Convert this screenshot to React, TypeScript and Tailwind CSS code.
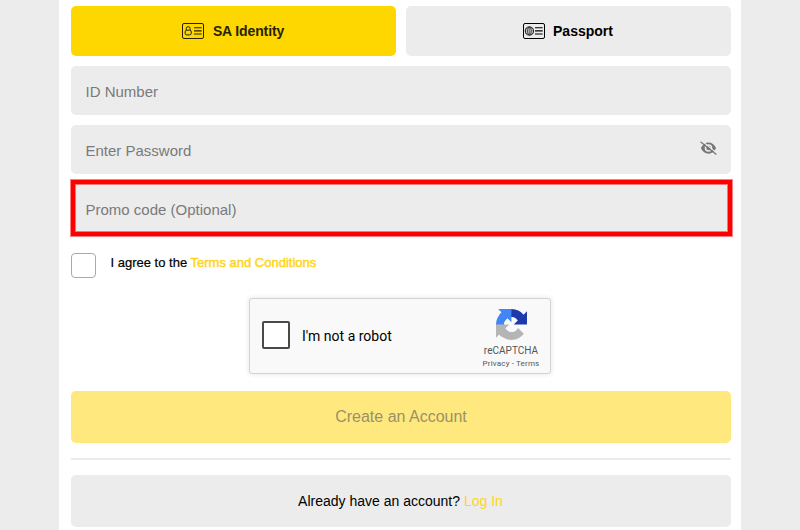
import { useState } from "react";
import type { ReactNode } from "react";

type Tab = "identity" | "passport";

function CardIcon({ children }: { children: ReactNode }) {
  return (
    <svg viewBox="0 0 22 16" className="h-4 w-[22px] shrink-0" fill="none" stroke="currentColor">
      <rect x="0.5" y="0.5" width="21" height="15" rx="1.5" strokeWidth="1" />
      {children}
      <path d="M12 4.8h7.7M12 7.9h7.7M12 11h7.7" strokeWidth="1.1" />
    </svg>
  );
}

function IdentityIcon() {
  return (
    <CardIcon>
      <path d="M4.300 7V5.500a1.900 1.900 0 0 1 3.800 0v1.500" strokeWidth="1" />
      <rect x="3.100" y="7.200" width="6.200" height="4.700" rx="1.800" strokeWidth="1" />
    </CardIcon>
  );
}

function PassportIcon() {
  return (
    <CardIcon>
      <circle cx="6.4" cy="8" r="4.100" strokeWidth="0.9" />
      <ellipse cx="6.4" cy="8" rx="1.9" ry="4.100" strokeWidth="0.6" />
      <path d="M2.300 8h8.200M3 5.900h6.800M3 10.100h6.800M6.400 3.900v8.200" strokeWidth="0.4" />
    </CardIcon>
  );
}

function EyeOffIcon() {
  return (
    <svg viewBox="0 0 17 14" className="h-3.5 w-[17px]" fill="none">
      <path d="M0.9 7C4 -0.5 13 -0.5 16.1 7C13 14.5 4 14.5 0.9 7Z" fill="currentColor" />
      <circle cx="8.5" cy="7" r="3" stroke="#ececec" strokeWidth="1.6" />
      <path d="M1.7 -0.1L17.3 12.4" stroke="#ececec" strokeWidth="1.2" />
      <path d="M0.5 0.7L16.4 13.4" stroke="currentColor" strokeWidth="1.3" />
    </svg>
  );
}

function RecaptchaLogo() {
  return (
    <svg viewBox="0 0 64 64" className="size-[31px]">
      <path
        fill="#1c3aa9"
        d="M64 31.955l-.033-1.37V4.687l-7.16 7.16C50.948 4.674 42.033.093 32.05.093c-10.4 0-19.622 4.96-25.458 12.64l11.736 11.86a15.55 15.55 0 0 1 4.754-5.334c2.05-1.6 4.952-2.906 8.968-2.906.485 0 .86.057 1.135.163 4.976.393 9.288 3.14 11.828 7.124l-8.307 8.307L64 31.953"
      />
      <path
        fill="#4285f4"
        d="M31.862.094l-1.37.033H4.594l7.16 7.16C4.58 13.147 0 22.06 0 32.046c0 10.4 4.96 19.622 12.64 25.458L24.5 45.768a15.55 15.55 0 0 1-5.334-4.754c-1.6-2.05-2.906-4.952-2.906-8.968 0-.485.057-.86.163-1.135.393-4.976 3.14-9.288 7.124-11.828l8.307 8.307L31.86.095"
      />
      <path
        fill="#b5b5b5"
        d="M.001 32.045l.033 1.37v25.898l7.16-7.16c5.86 7.173 14.774 11.754 24.76 11.754 10.4 0 19.622-4.96 25.458-12.64l-11.736-11.86a15.55 15.55 0 0 1-4.754 5.334c-2.05 1.6-4.952 2.906-8.968 2.906-.485 0-.86-.057-1.135-.163-4.976-.393-9.288-3.14-11.828-7.124l8.307-8.307c-10.522.04-22.4.066-27.295-.005"
      />
    </svg>
  );
}

function Recaptcha() {
  return (
    <div className="ml-[178px] mt-5 flex h-[76px] w-[302px] items-center rounded-[3px] border border-[#d3d3d3] bg-[#f9f9f9] pl-3 font-['Roboto',sans-serif] shadow-[0_0_4px_1px_rgba(0,0,0,0.08)]">
      <input type="checkbox" className="mb-0.5 size-7 appearance-none rounded-[2px] border-2 border-[#4a4a4a] bg-white" />
      <span className="ml-3 text-sm text-black">I'm not a robot</span>
      <div className="ml-auto flex w-[78px] flex-col items-center pt-1.5 text-[#555]">
        <RecaptchaLogo />
        <span className="mt-[5px] text-[10px] leading-3 tracking-[0.03px]">reCAPTCHA</span>
        <span className="mt-px text-[8px] leading-[11px] tracking-[0.16px]">Privacy - Terms</span>
      </div>
    </div>
  );
}

export default function App() {
  const [tab, setTab] = useState<Tab>("identity");
  const [showPassword, setShowPassword] = useState(false);

  const tabClass = (name: Tab) =>
    tab === name ? "bg-[#ffd700] text-[#282200]" : "bg-[#ececec] text-black";

  return (
    <div className="h-[530px] overflow-hidden bg-[#ececec] font-['Liberation_Sans',Arial,sans-serif]">
      <form onSubmit={(e) => e.preventDefault()} className="mx-auto h-full w-[682px] bg-white pl-3 pr-2.5 pt-1.5">
        <div className="grid grid-cols-2 gap-2.5">
          <button
            type="button"
            onClick={() => setTab("identity")}
            className={`flex h-[50px] items-center justify-center gap-[9px] rounded-[5px] pr-px text-sm font-bold tracking-[-0.13px] ${tabClass("identity")}`}
          >
            <IdentityIcon />
            SA Identity
          </button>
          <button
            type="button"
            onClick={() => setTab("passport")}
            className={`flex h-[50px] items-center justify-center gap-2 rounded-[5px] pr-px text-sm font-bold ${tabClass("passport")}`}
          >
            <PassportIcon />
            Passport
          </button>
        </div>

        <input
          placeholder="ID Number"
          className="mt-2.5 block h-[49px] w-full rounded-[5px] bg-[#ececec] px-[14.5px] pt-0.5 text-[15px] outline-none placeholder:text-[#7a7a7a]"
        />

        <div className="mt-2.5 flex h-[49px] items-center rounded-[5px] bg-[#ececec] pr-3.5">
          <input
            type={showPassword ? "text" : "password"}
            placeholder="Enter Password"
            className="h-full flex-1 px-[14.5px] pt-0.5 text-[15px] outline-none placeholder:text-[#7a7a7a]"
          />
          <button type="button" onClick={() => setShowPassword(!showPassword)} className="mb-1 text-[#777]">
            <EyeOffIcon />
          </button>
        </div>

        {/* Highlighted promo field */}
        <div className="-mr-px mt-1.5 h-14 border-4 border-[#fe0000] bg-[#ececec] shadow-[0_0_0_1px_rgba(254,0,0,0.5),inset_0_0_0_1px_rgba(254,0,0,0.5)]">
          <input
            placeholder="Promo code (Optional)"
            className="block h-full w-full px-[10.5px] pt-0.5 text-[15px] outline-none placeholder:text-[#7a7a7a]"
          />
        </div>

        <label className="mt-[17px] flex gap-[14.5px] text-[13px] text-black">
          <input type="checkbox" className="size-[25px] appearance-none rounded-[4px] border border-[#aaa] bg-white" />
          <span className="leading-5 [-webkit-text-stroke:0.2px]">
            I agree to the{" "}
            <a className="text-[#ffd51a] [-webkit-text-stroke:0.5px]">Terms and Conditions</a>
          </span>
        </label>

        <Recaptcha />

        <button
          type="submit"
          disabled
          className="mt-[17px] block h-[52px] w-full rounded-[5px] bg-[#ffe97f] text-base text-[#9b9067]"
        >
          Create an Account
        </button>

        <hr className="mt-[15px] border-t-2 border-[#ececec]" />

        <div className="mt-[15px] flex h-[52px] items-center justify-center gap-1 rounded-[5px] bg-[#ececec] pb-px pr-px text-sm text-black">
          Already have an account? <a className="text-[#ffd51a]">Log In</a>
        </div>
      </form>
    </div>
  );
}
